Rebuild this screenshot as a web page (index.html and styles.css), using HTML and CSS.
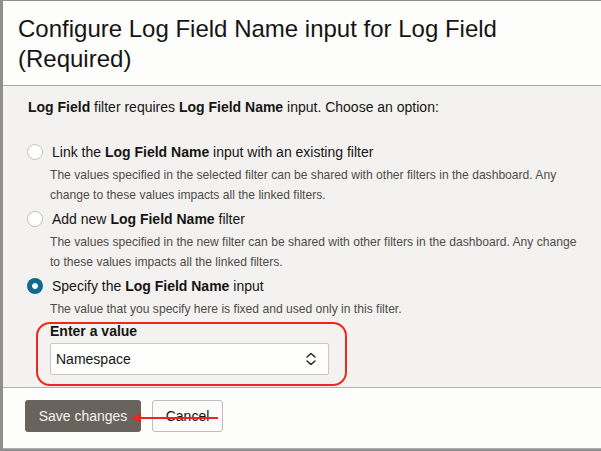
FILE: index.html
```html
<!DOCTYPE html>
<html>
<head>
<meta charset="utf-8">
<link rel="stylesheet" href="styles.css">
</head>
<body>
<div class="dialog">
  <div class="header">
    <h1 class="title">Configure Log Field Name input for Log Field (Required)</h1>
  </div>
  <div class="body">
    <p class="intro"><b>Log Field</b> filter requires <b>Log Field Name</b> input. Choose an option:</p>
    <div class="options">
      <div class="option">
        <div class="opt-row"><span class="radio"></span><span class="label">Link the <b>Log Field Name</b> input with an existing filter</span></div>
        <p class="desc">The values specified in the selected filter can be shared with other filters in the dashboard. Any change to these values impacts all the linked filters.</p>
      </div>
      <div class="option">
        <div class="opt-row"><span class="radio"></span><span class="label">Add new <b>Log Field Name</b> filter</span></div>
        <p class="desc">The values specified in the new filter can be shared with other filters in the dashboard. Any change to these values impacts all the linked filters.</p>
      </div>
      <div class="option">
        <div class="opt-row"><span class="radio checked"></span><span class="label">Specify the <b>Log Field Name</b> input</span></div>
        <p class="desc">The value that you specify here is fixed and used only in this filter.</p>
      </div>
    </div>
    <div class="highlight">
      <div class="field-label">Enter a value</div>
      <div class="select">
        <span class="select-text">Namespace</span>
        <svg class="chev" width="12" height="16" viewBox="0 0 12 16"><path d="M2 6 L6 2.5 L10 6 M2 10 L6 13.5 L10 10" fill="none" stroke="#222" stroke-width="1.5" stroke-linecap="round" stroke-linejoin="round"/></svg>
      </div>
    </div>
  </div>
  <div class="footer">
    <button class="btn primary">Save changes</button>
    <button class="btn secondary">Cancel</button>
    <svg class="arrow" width="90" height="14" viewBox="0 0 90 14"><path d="M88 7 L8 7" stroke="#e8281a" stroke-width="2"/><path d="M1 7 L11 2 L11 12 Z" fill="#e8281a"/></svg>
  </div>
</div>
</body>
</html>
```
FILE: styles.css
```css
html, body {
  margin: 0;
  padding: 0;
}
body {
  background: #8f8f8f;
  width: 601px;
  height: 451px;
  overflow: hidden;
  font-family: "Liberation Sans", Arial, sans-serif;
  color: #161513;
}
.dialog {
  margin: 1px 0 0 3px;
  width: 600px;
  height: 448px;
  background: #fcfcfb;
  display: flex;
  flex-direction: column;
  border-bottom: 1px solid #b0b0b0;
  box-sizing: border-box;
}
.header {
  height: 85px;
  box-sizing: border-box;
  padding: 13px 16px 0 15px;
  border-bottom: 1px solid #aaa8a4;
  background: #fdfdfc;
}
.title {
  margin: 0;
  font-weight: normal;
  font-size: 24px;
  line-height: 30px;
  color: #161513;
  width: 540px;
}
.body {
  background: #f3f2f0;
  height: 302px;
  box-sizing: border-box;
  padding: 11px 0 0 0;
  border-bottom: 1px solid #b5b3af;
}
.intro {
  margin: 0 0 0 25px;
  font-size: 14px;
  line-height: 20px;
}
.options {
  margin-top: 22px;
  display: flex;
  flex-direction: column;
}
.option {
  margin-bottom: 1px;
}
.opt-row {
  display: flex;
  align-items: center;
  height: 26px;
  padding-left: 24px;
}
.radio {
  width: 14px;
  height: 14px;
  border: 1px solid #c4c2bf;
  border-radius: 50%;
  background: #fff;
  margin-right: 9px;
  flex: none;
}
.radio.checked {
  width: 16px;
  height: 16px;
  border: none;
  background: radial-gradient(circle, #fff 0 2.6px, #0e6a8e 3.2px);
}
.label {
  font-size: 14px;
  line-height: 20px;
}
.desc {
  margin: 0 0 0 47px;
  font-size: 12.1px;
  line-height: 20px;
  color: #4f4c49;
  width: 530px;
}
.highlight {
  margin: 2px 0 0 33px;
  width: 311px;
  height: 64px;
  box-sizing: border-box;
  border: 2px solid #f0261a;
  border-radius: 14px;
  padding: 0 0 0 12px;
}
.field-label {
  font-size: 14px;
  font-weight: bold;
  line-height: 14px;
  margin-top: 0;
  color: #161513;
}
.select {
  margin-top: 5px;
  width: 279px;
  height: 32px;
  box-sizing: border-box;
  border: 1px solid #c9c7c3;
  border-radius: 2px;
  background: #fefefd;
  display: flex;
  align-items: center;
  justify-content: space-between;
  padding: 0 11px 0 5px;
}
.select-text {
  font-size: 14px;
}
.chev {
  display: block;
}
.footer {
  flex: 1;
  display: flex;
  align-items: flex-start;
  padding: 12px 0 0 22px;
  gap: 11px;
  position: relative;
  background: #fdfdfc;
}
.btn {
  font-family: "Liberation Sans", Arial, sans-serif;
  font-size: 14px;
  height: 32px;
  border-radius: 3px;
  padding: 0;
  margin: 0;
  white-space: nowrap;
}
.primary {
  background: #6a625d;
  color: #f4f2ef;
  border: none;
  width: 116px;
}
.secondary {
  background: #fbfbfa;
  color: #161513;
  border: 1px solid #c0beba;
  width: 71px;
}
.arrow {
  position: absolute;
  left: 127px;
  top: 23px;
}
```
